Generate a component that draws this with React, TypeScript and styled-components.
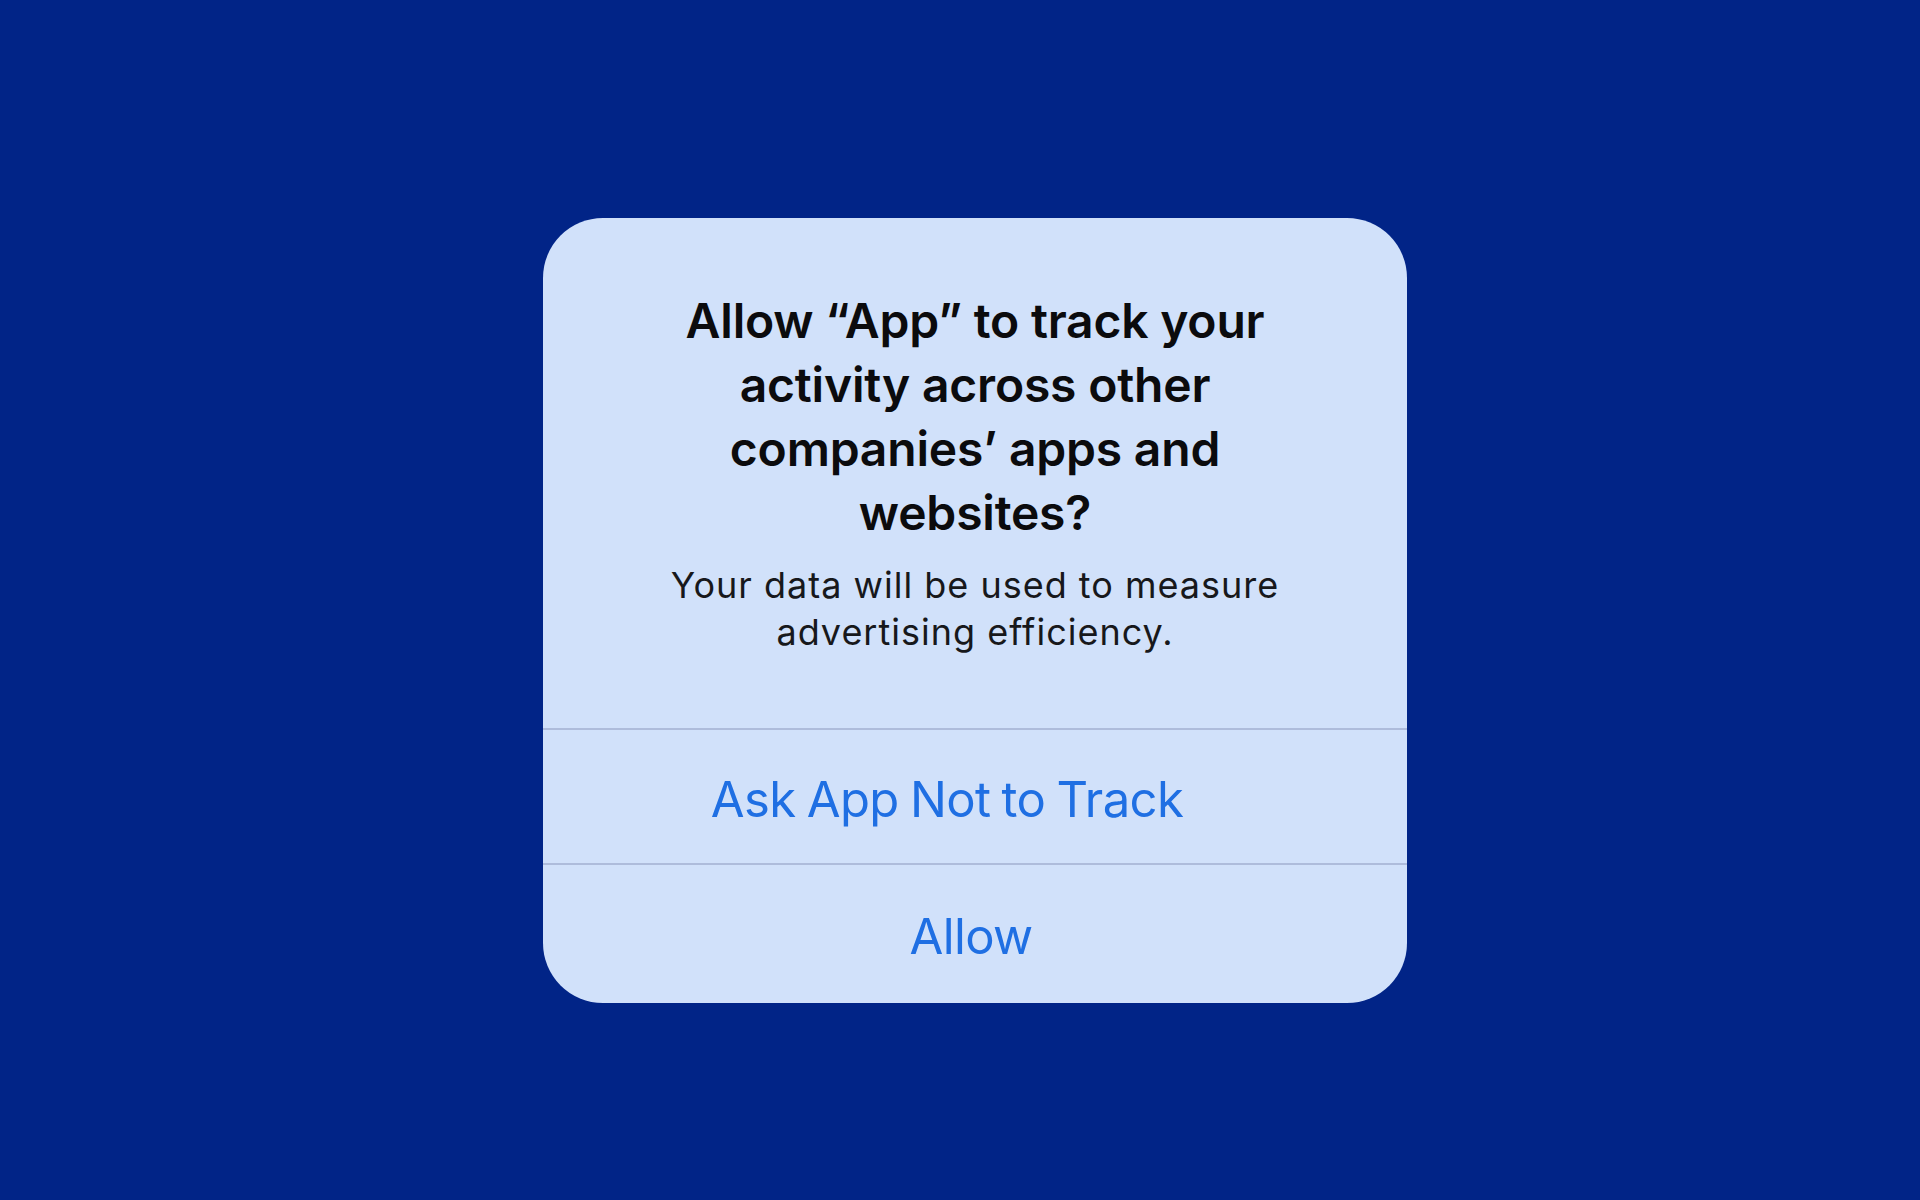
import React from "react";
import styled, { createGlobalStyle } from "styled-components";

const GlobalStyle = createGlobalStyle`
  html, body {
    margin: 0;
    padding: 0;
    background: #012487;
  }
  body {
    font-family: Inter, "Noto Sans", "Liberation Sans", sans-serif;
    -webkit-font-smoothing: antialiased;
  }
`;

const Page = styled.main`
  min-height: 1200px;
  box-sizing: border-box;
  padding: 218px 0 0 30px;
  display: flex;
  justify-content: center;
  align-items: flex-start;
  background: #012487;
`;

const Alert = styled.section`
  width: 864px;
  background: #d1e1fa;
  border-radius: 60px;
  overflow: hidden;
  display: flex;
  flex-direction: column;
`;

const Content = styled.div`
  padding: 71px 60px 72px;
  display: flex;
  flex-direction: column;
  align-items: center;
  gap: 17px;
  text-align: center;
`;

const Title = styled.h1`
  margin: 0;
  font-size: 48px;
  line-height: 64px;
  font-weight: 580;
  color: #0b0b0d;
  letter-spacing: -0.2px;
  max-width: 600px;
`;

const Message = styled.p`
  margin: 0;
  font-size: 36px;
  line-height: 47px;
  font-weight: 400;
  color: #17181b;
  letter-spacing: 1px;
`;

const Action = styled.button<{ $nudge?: number; $height: number }>`
  appearance: none;
  border: 0;
  border-top: 2px solid #aebcdb;
  background: transparent;
  height: ${(p) => p.$height}px;
  margin: 0;
  padding: 5px ${(p) => (p.$nudge ?? 0) * 2}px 0 0;
  display: flex;
  align-items: center;
  justify-content: center;
  font-family: inherit;
  font-size: 49px;
  font-weight: 400;
  color: #1f6fe3;
  letter-spacing: -0.6px;
  word-spacing: -2px;
  cursor: pointer;
`;

export default function App() {
  return (
    <>
      <GlobalStyle />
      <Page>
        <Alert role="alertdialog">
          <Content>
            <Title>
              Allow “App” to track your activity across other companies’ apps
              and websites?
            </Title>
            <Message>
              Your data will be used to measure
              <br />
              advertising efficiency.
            </Message>
          </Content>
          <Action $nudge={28} $height={135}>
            Ask App Not to Track
          </Action>
          <Action $nudge={4} $height={140}>
            Allow
          </Action>
        </Alert>
      </Page>
    </>
  );
}
